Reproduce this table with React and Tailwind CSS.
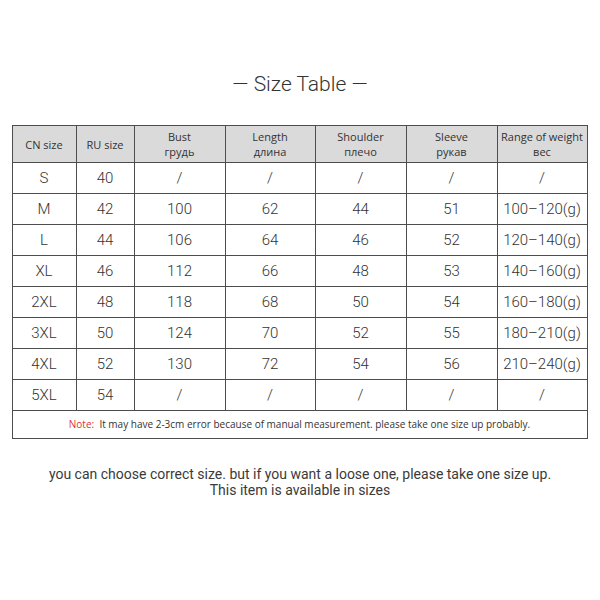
import React from "react";

const colClasses = [
  "w-[64px]",
  "w-[58px]",
  "w-[91px]",
  "w-[90px]",
  "w-[91px]",
  "w-[91px]",
  "w-[90px]",
];
const headers = [
  ["CN size"],
  ["RU size"],
  ["Bust", "грудь"],
  ["Length", "длина"],
  ["Shoulder", "плечо"],
  ["Sleeve", "рукав"],
  ["Range of weight", "вес"],
];
const rows = [
  ["S", "40", "/", "/", "/", "/", "/"],
  ["M", "42", "100", "62", "44", "51", "100–120(g)"],
  ["L", "44", "106", "64", "46", "52", "120–140(g)"],
  ["XL", "46", "112", "66", "48", "53", "140–160(g)"],
  ["2XL", "48", "118", "68", "50", "54", "160–180(g)"],
  ["3XL", "50", "124", "70", "52", "55", "180–210(g)"],
  ["4XL", "52", "130", "72", "54", "56", "210–240(g)"],
  ["5XL", "54", "/", "/", "/", "/", "/"],
];

export default function App() {
  return (
    <div className="w-[600px] h-[600px] bg-white flex flex-col items-center font-['Roboto','Liberation_Sans',sans-serif]">
      <div className="mt-[71px] h-[26px] text-[21px] leading-[26px] text-[#333] font-light">
        — Size Table —
      </div>
      <table className="mt-[28px] ml-[-1px] w-[575px] border-collapse table-fixed">
        <colgroup>
          {colClasses.map((c, i) => (
            <col key={i} className={c} />
          ))}
        </colgroup>
        <thead>
          <tr className="h-[37px] bg-[#dadada]">
            {headers.map((h, i) => (
              <th
                key={i}
                className="border border-[#4d4d4d] p-0 text-center text-[11px] font-normal leading-[15px] text-[#333] font-['Open_Sans','Noto_Sans',sans-serif]"
              >
                {h.map((t, j) => (
                  <div key={j}>{t}</div>
                ))}
              </th>
            ))}
          </tr>
        </thead>
        <tbody>
          {rows.map((r, i) => (
            <tr key={i} className="h-[31px]">
              {r.map((c, j) => (
                <td
                  key={j}
                  className="border border-[#4d4d4d] p-0 text-center text-[15px] font-light text-[#333]"
                >
                  {c}
                </td>
              ))}
            </tr>
          ))}
          <tr className="h-[28px]">
            <td
              colSpan={7}
              className="border border-[#4d4d4d] p-0 text-center text-[10px] text-[#333] font-['Open_Sans','Noto_Sans',sans-serif]"
            >
              <span className="text-[#e0303a]">Note:</span>&nbsp; It may have
              2-3cm error because of manual measurement. please take one size
              up probably.
            </td>
          </tr>
        </tbody>
      </table>
      <div className="mt-[27px] text-center text-[14px] leading-[16px] text-[#3a3a3a]">
        <div>
          you can choose correct size. but if you want a loose one, please take
          one size up.
        </div>
        <div>This item is available in sizes</div>
      </div>
    </div>
  );
}
